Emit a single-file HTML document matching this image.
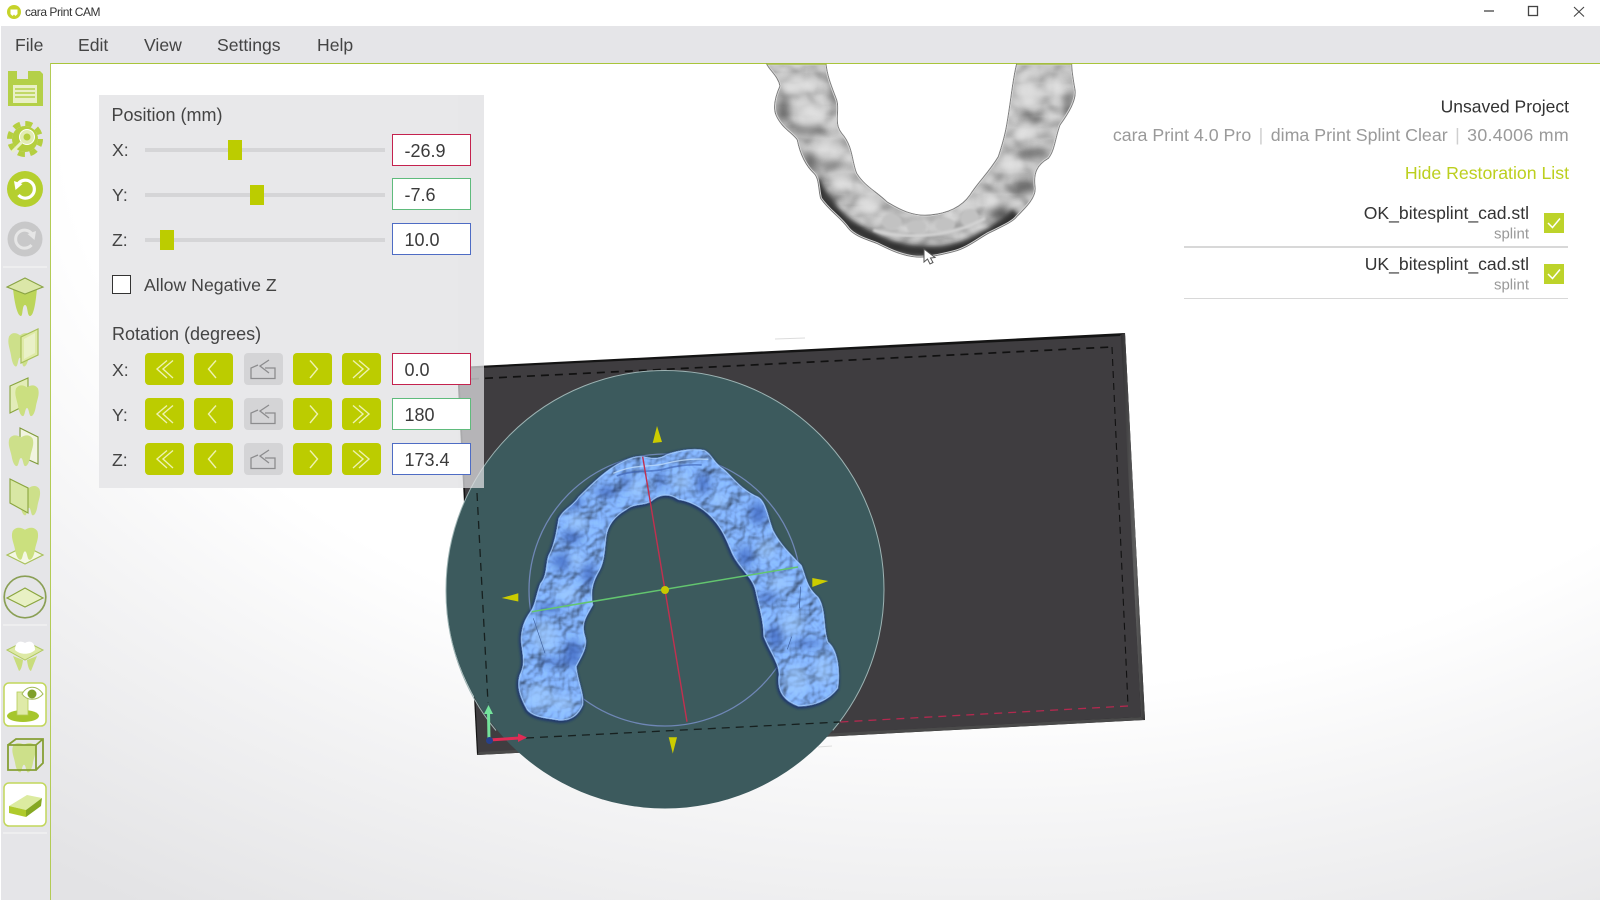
<!DOCTYPE html>
<html><head><meta charset="utf-8"><title>cara Print CAM</title>
<style>
html,body{margin:0;padding:0;width:1600px;height:900px;overflow:hidden;background:#fff}
body{position:relative;font-family:"Liberation Sans",Arial,sans-serif;color:#3a3a3a}
.a{position:absolute;white-space:nowrap}
.t{position:absolute;white-space:nowrap;transform:translateY(-50%);line-height:1}
.r{position:absolute;white-space:nowrap;transform:translateY(-50%);line-height:1;text-align:right}
#view{position:absolute;left:51px;top:64px;width:1549px;height:836px;background:radial-gradient(ellipse 1350px 860px at 60% 5%,#fff 0%,#fff 68%,#f3f3f4 86%,#e3e3e5 112%)}
#menu{position:absolute;left:1px;top:26px;width:1599px;height:37px;background:#e5e5e8}
#gl{position:absolute;left:50px;top:63px;width:1550px;height:1px;background:#a9c53a}
#side{position:absolute;left:1px;top:63px;width:49px;height:837px;background:#e5e5e8;border-right:1.5px solid #b3cb55;box-sizing:content-box}
#panel{position:absolute;left:99px;top:95px;width:385px;height:393px;background:rgba(223,223,225,.74);}
#panelb{position:absolute;left:99px;top:95px;width:359px;height:393px;background:#e8e8ea}
.lbl{font-size:17.7px;color:#444}
.inp{position:absolute;left:392px;width:79px;height:32px;box-sizing:border-box;background:#fff;border:1.5px solid #888;font-size:18px;line-height:33px;padding-left:11.5px;color:#3a3a3a}
.trk{position:absolute;left:145px;width:240px;height:3.5px;background:#d5d5d7}
.th{position:absolute;width:13.5px;height:20px;background:#bccc00}
.btn{position:absolute;width:39px;height:32px;border-radius:4px;background:#bccc00}
.btn.g{background:#d4d4d6}
.btn svg{display:block}
.cb{position:absolute;left:1544px;width:20px;height:20px;background:#bdd32a}
.sep{color:#cfcfcf;margin:0 2.5px}
</style></head><body>
<div id="view"></div>
<div id="menu"></div>
<div id="gl"></div>
<div id="side"></div>

<svg class="a" style="left:0;top:0" width="1600" height="900" viewBox="0 0 1600 900">
<defs>
<linearGradient id="rb" x1="0" x2="1" y1="0" y2="0"><stop offset="0" stop-color="#2f2e30"/><stop offset=".6" stop-color="#5f5f5f"/><stop offset="1" stop-color="#3a3a3a"/></linearGradient>
<filter id="blue" x="-5%" y="-5%" width="110%" height="110%" color-interpolation-filters="sRGB">
<feTurbulence type="fractalNoise" baseFrequency=".018" numOctaves="3" seed="7" result="n"/>
<feDiffuseLighting in="n" surfaceScale="13" diffuseConstant="1.08" lighting-color="#82b2fb" result="l"><feDistantLight azimuth="235" elevation="62"/></feDiffuseLighting>
<feComposite in="l" in2="SourceAlpha" operator="in"/>
</filter>
<filter id="gray" x="-5%" y="-5%" width="110%" height="110%" color-interpolation-filters="sRGB">
<feTurbulence type="fractalNoise" baseFrequency=".015" numOctaves="2" seed="3" result="n"/>
<feDiffuseLighting in="n" surfaceScale="10" diffuseConstant="1.05" lighting-color="#cfcfcf" result="l"><feDistantLight azimuth="90" elevation="62"/></feDiffuseLighting>
<feComposite in="l" in2="SourceAlpha" operator="in"/>
</filter>
<filter id="b6"><feGaussianBlur stdDeviation="6"/></filter>
<filter id="b12"><feGaussianBlur stdDeviation="13"/></filter>
<filter id="b3"><feGaussianBlur stdDeviation="3"/></filter>
<path id="blueP" d="M290 1050C268 1010 258 980 268 945C282 915 280 900 274 860C268 820 278 785 300 755C315 735 318 700 330 670C352 645 345 610 355 585C372 555 378 515 385 475C400 445 425 440 445 410C480 375 515 340 555 315C590 295 620 282 650 290C670 295 690 295 710 282C745 270 790 262 825 270C850 285 850 305 880 325C910 350 930 385 985 410C1010 425 1015 470 1030 510C1050 550 1085 585 1115 615C1130 650 1130 680 1165 710C1190 745 1180 800 1195 845C1225 870 1232 930 1225 985C1195 1025 1150 1040 1105 1040C1065 1025 1040 1000 1045 950C1050 915 1020 880 1000 830C1000 780 985 740 975 690C965 650 925 625 905 580C890 545 880 515 850 480C820 445 780 425 745 420C720 402 690 402 665 425C640 440 615 430 590 450C555 470 535 495 530 530C525 570 525 610 505 640C488 670 482 700 490 735C470 770 455 790 465 825C478 860 455 890 440 920C445 965 465 1005 460 1035C445 1070 420 1085 385 1082C350 1075 310 1075 290 1050Z"/>
<clipPath id="blueC"><use href="#blueP"/></clipPath>
<path id="grayP" d="M80 42C90 62 115 80 120 108C108 135 98 170 108 195C125 235 160 250 172 270C178 300 190 340 222 370C238 385 235 420 242 445C270 485 300 500 325 535C345 560 385 570 410 580C440 595 480 615 520 620C560 625 600 615 640 605C680 595 710 570 745 550C785 530 820 515 830 500C860 470 890 440 885 410C880 370 890 345 925 325C945 300 945 265 960 225C985 190 1010 150 1005 120C1000 90 995 65 995 42H830C820 80 815 130 808 175C800 230 795 260 775 320C745 370 715 395 690 435C665 470 625 490 570 495C520 500 480 480 440 455C410 425 375 410 350 370C335 335 340 290 305 250C280 220 300 180 290 150C275 110 262 80 258 42Z"/>
<clipPath id="grayC"><use href="#grayP"/></clipPath>
<path id="tooth" d="M-11 -10C-8 -14 -3 -13 0 -11C3 -13 8 -14 11 -10C13 -5 10 0 9 5C8 11 6 14 4 14C2 14 2 7 0 7C-2 7 -2 14 -4 14C-6 14 -8 11 -9 5C-10 0 -13 -5 -11 -10Z"/>
</defs>

<!-- faint labels -->
<line x1="775" y1="339" x2="805" y2="338" stroke="#dcdcdc" stroke-width="1"/>
<line x1="818" y1="747" x2="832" y2="746" stroke="#dddddd" stroke-width="1"/>

<!-- build plate -->
<polygon points="457,367 1125,333 1145,720 477,755" fill="#141414"/>
<polygon points="1120,335 1125,333 1145,720 1141,717" fill="url(#rb)"/>
<polygon points="479,751 1141,717 1144.500,720 477,755" fill="#4a4a4a"/>
<polygon points="459,369 1121,336 1141,717 478,752" fill="#3f3d40"/>
<line x1="471" y1="379" x2="1112" y2="347" stroke="#111" stroke-width="1.700" stroke-dasharray="8 6"/>
<line x1="1112" y1="347" x2="1128" y2="706" stroke="#111" stroke-width="1.100" stroke-dasharray="7 5"/>
<line x1="1128" y1="706" x2="840" y2="722" stroke="#b3294f" stroke-width="1.300" stroke-dasharray="8 6"/>

<!-- gizmo disc -->
<circle cx="665" cy="589.500" r="219" fill="#3c5a5d"/>
<path d="M496 730.500A219 219 0 0 1 446 589.500A219 219 0 0 1 884 589.500A219 219 0 0 1 832.800 730.300" fill="none" stroke="#9db3b3" stroke-width="1"/>
<circle cx="665" cy="590" r="136" fill="none" stroke="#6f87b6" stroke-width="1.300"/>
<!-- dashed over disc -->
<line x1="477" y1="493" x2="488" y2="703" stroke="#17201f" stroke-width="1.300" stroke-dasharray="8 6"/>
<line x1="526" y1="738" x2="840" y2="722" stroke="#17201f" stroke-width="1.300" stroke-dasharray="8 6"/>

<!-- blue aligner -->
<g transform="translate(430 360) scale(.33333)">
 <use href="#blueP" fill="#1c3470" stroke="#1c3470" stroke-width="7" transform="translate(-2 3)" filter="url(#b3)" opacity=".85"/>
 <use href="#blueP" filter="url(#blue)" fill="#000"/>
 <g clip-path="url(#blueC)">
  <g filter="url(#b12)" fill="#3a63be" opacity=".72">
   <ellipse cx="420" cy="425" rx="40" ry="18"/><ellipse cx="530" cy="395" rx="32" ry="15"/>
   <ellipse cx="425" cy="530" rx="30" ry="20"/><ellipse cx="395" cy="605" rx="28" ry="26"/><ellipse cx="475" cy="640" rx="18" ry="34"/>
   <ellipse cx="430" cy="880" rx="26" ry="40"/><ellipse cx="985" cy="460" rx="26" ry="34"/><ellipse cx="945" cy="590" rx="22" ry="30"/>
   <ellipse cx="1010" cy="715" rx="30" ry="14"/><ellipse cx="1035" cy="830" rx="22" ry="36"/><ellipse cx="820" cy="370" rx="18" ry="30"/><ellipse cx="690" cy="360" rx="10" ry="30"/>
   <ellipse cx="355" cy="745" rx="40" ry="12"/><ellipse cx="380" cy="905" rx="50" ry="10"/><ellipse cx="1130" cy="850" rx="50" ry="10"/><ellipse cx="590" cy="365" rx="12" ry="24"/>
  </g>
  <g filter="url(#b12)" fill="#a3cdff" opacity=".6">
   <ellipse cx="330" cy="1010" rx="42" ry="38"/><ellipse cx="400" cy="1030" rx="34" ry="26"/><ellipse cx="345" cy="830" rx="40" ry="46"/><ellipse cx="1100" cy="960" rx="36" ry="48"/><ellipse cx="1180" cy="930" rx="28" ry="46"/>
   <ellipse cx="1085" cy="790" rx="36" ry="38"/><ellipse cx="440" cy="490" rx="30" ry="24"/><ellipse cx="620" cy="385" rx="26" ry="28"/><ellipse cx="755" cy="365" rx="28" ry="26"/>
   <ellipse cx="1010" cy="570" rx="28" ry="30"/><ellipse cx="870" cy="420" rx="24" ry="20"/><ellipse cx="1050" cy="670" rx="34" ry="20"/><ellipse cx="440" cy="600" rx="22" ry="24"/><ellipse cx="410" cy="700" rx="34" ry="24"/>
  </g>
  <use href="#blueP" fill="none" stroke="#a9cffb" stroke-width="8" opacity=".8"/>
  <use href="#blueP" fill="none" stroke="#23407f" stroke-width="2.500" opacity=".55"/>
  <path d="M550 340C610 312 660 322 700 312C745 300 790 295 835 298" fill="none" stroke="#b9d8fb" stroke-width="4" opacity=".85"/>
  <path d="M560 348C610 328 660 338 700 328C745 315 780 313 815 315" fill="none" stroke="#3a5fb0" stroke-width="5" opacity=".6"/>
 </g>
 <path d="M310 775L345 880M1112 680L1108 745M1085 830L1072 868" fill="none" stroke="#3f62a0" stroke-width="2"/>
</g>

<!-- axes -->
<line x1="642.700" y1="456.700" x2="687" y2="721.700" stroke="#c2304f" stroke-width="1.400"/>
<line x1="531.700" y1="611.700" x2="798" y2="567" stroke="#63c56f" stroke-width="1.500"/>
<circle cx="665" cy="590" r="4" fill="#c8c800"/>
<g fill="#cccc00">
 <polygon points="657,426 652.700,443 662,442"/>
 <polygon points="668.700,737.300 677,737.300 672.800,753.500"/>
 <polygon points="501.700,598 518.300,593.300 518.300,601.500"/>
 <polygon points="828.300,581 812.300,578 812.300,587"/>
</g>
<!-- origin triad -->
<line x1="489" y1="740" x2="488.500" y2="712" stroke="#74e39c" stroke-width="3"/>
<polygon points="488.500,705 484,714 493,714" fill="#74e39c"/>
<line x1="489" y1="740" x2="520" y2="738" stroke="#e02c55" stroke-width="3"/>
<polygon points="527,737.500 518,733.500 518,742" fill="#e02c55"/>
<circle cx="489.500" cy="740.500" r="3.500" fill="#26408c"/>

<!-- gray aligner -->
<g transform="translate(740 50) scale(.33333)">
 <use href="#grayP" fill="#777" stroke="#777" stroke-width="3"/>
 <use href="#grayP" filter="url(#gray)" fill="#000"/>
 <g clip-path="url(#grayC)">
  <path d="M225 390C250 470 320 530 400 565C470 605 600 620 680 585C730 565 780 535 830 490" fill="none" stroke="#1e1e1e" stroke-width="34" filter="url(#b6)" opacity=".85"/>
  <g filter="url(#b12)" fill="#3a3a3a" opacity=".7">
   <ellipse cx="130" cy="175" rx="18" ry="34"/><ellipse cx="210" cy="335" rx="22" ry="26"/><ellipse cx="265" cy="450" rx="24" ry="28"/>
   <ellipse cx="880" cy="310" rx="44" ry="14"/><ellipse cx="850" cy="410" rx="34" ry="20"/><ellipse cx="780" cy="490" rx="32" ry="26"/><ellipse cx="985" cy="170" rx="12" ry="50"/>
   <ellipse cx="285" cy="120" rx="12" ry="50"/><ellipse cx="200" cy="240" rx="60" ry="10"/><ellipse cx="270" cy="345" rx="40" ry="10"/><ellipse cx="870" cy="205" rx="40" ry="8"/>
  </g>
  <g filter="url(#b12)" fill="#e6e6e6" opacity=".75">
   <ellipse cx="215" cy="195" rx="52" ry="34"/><ellipse cx="175" cy="110" rx="45" ry="28"/><ellipse cx="265" cy="290" rx="40" ry="28"/><ellipse cx="300" cy="395" rx="32" ry="26"/>
   <ellipse cx="860" cy="125" rx="34" ry="42"/><ellipse cx="950" cy="110" rx="28" ry="32"/><ellipse cx="860" cy="250" rx="36" ry="28"/><ellipse cx="815" cy="350" rx="32" ry="28"/>
   <ellipse cx="385" cy="465" rx="34" ry="32"/><ellipse cx="755" cy="450" rx="22" ry="26"/>
  </g>
  <g fill="#c2c2c2" filter="url(#b3)">
   <ellipse cx="455" cy="515" rx="30" ry="24"/><ellipse cx="530" cy="530" rx="30" ry="20"/><ellipse cx="615" cy="525" rx="30" ry="22"/><ellipse cx="690" cy="505" rx="28" ry="28"/>
  </g>
  <path d="M400 540C470 565 620 570 735 505" fill="none" stroke="#d4d4d4" stroke-width="9" filter="url(#b3)"/>
  <use href="#grayP" fill="none" stroke="#d2d2d2" stroke-width="8"/>
  <use href="#grayP" fill="none" stroke="#555" stroke-width="2"/>
 </g>
 <rect x="80" y="40" width="180" height="4" fill="#a5c037" opacity=".9"/>
 <rect x="830" y="40" width="166" height="4" fill="#a5c037" opacity=".9"/>
</g>
<path d="M924 249V262L927.500 259L930 264L933 262.500L930.500 258L935 257.500Z" fill="#fff" stroke="#555" stroke-width="1"/>

<!-- window icons -->
<g stroke="#444" fill="none">
 <line x1="1484" y1="11" x2="1494" y2="11" stroke-width="1.300"/>
 <rect x="1528.500" y="6.500" width="9" height="9" stroke-width="1.300"/>
 <path d="M1574 7L1584 16.500M1584 7L1574 16.500" stroke-width="1.100"/>
</g>
<circle cx="14" cy="12" r="7" fill="#c6d32a"/>
<path d="M10.500 9.500H17.500V14L15.500 16L14 14.500L12.500 16L10.500 14Z" fill="#fff"/>

<!-- sidebar icons -->
<line x1="3" y1="267" x2="47" y2="267" stroke="#f6f6f6" stroke-width="1"/>
<line x1="3" y1="625" x2="47" y2="625" stroke="#f6f6f6" stroke-width="1"/>
<line x1="3" y1="833" x2="47" y2="833" stroke="#f6f6f6" stroke-width="1"/>
<!-- save -->
<path d="M8 71H40L43 74V106H8Z" fill="#b4d048"/>
<rect x="17" y="71" width="11" height="8" fill="#e5e5e8"/>
<rect x="13" y="85" width="24" height="18" fill="#e9f0c6"/>
<path d="M15 89H35M15 93H35M15 97H35" stroke="#b4d048" stroke-width="1.400"/>
<!-- gear -->
<circle cx="25" cy="139" r="13" fill="#b5cf40"/>
<circle cx="25" cy="139" r="15.500" fill="none" stroke="#b5cf40" stroke-width="5" stroke-dasharray="7 5.200"/>
<circle cx="27" cy="137" r="7.500" fill="#e2ecb4" stroke="#fff" stroke-width="1"/>
<circle cx="27" cy="137" r="3.500" fill="#b5cf40"/>
<path d="M22 142L12 152" stroke="#e9f0c6" stroke-width="3"/>
<!-- undo -->
<circle cx="25" cy="189" r="18" fill="#b5cf2e"/>
<path d="M18 184A9 9 0 1 1 18.500 195" fill="none" stroke="#fff" stroke-width="3.200"/>
<polygon points="14,181 22.500,184 15.500,190" fill="#fff"/>
<!-- redo -->
<circle cx="25" cy="239" r="17.500" fill="#c8c8c9"/>
<path d="M32 234A9 9 0 1 0 31.500 245" fill="none" stroke="#e6e6e6" stroke-width="3"/>
<polygon points="36,231 27.500,234 34.500,240" fill="#e6e6e6"/>
<!-- icon1 tooth with plane -->
<path d="M13 288C14 300 17 316 21 316C23 316 22 305 25 305C28 305 27 316 30 316C34 316 36 300 37 288Z" fill="#bcd55a"/>
<polygon points="7,287 25,278 43,287 25,294" fill="#dbe7a8" stroke="#89a344" stroke-width="1.100"/>
<!-- icon2 -->
<g transform="translate(20 349)"><use href="#tooth" fill="#cde08a" transform="scale(1 1.25)"/></g>
<polygon points="21,337 38,329 38,355 21,363" fill="#dfeaa8" stroke="#a8c05a" stroke-width="1.200"/>
<polygon points="24,339 35,333 35,353 24,359" fill="#eaf1c8"/>
<!-- icon3 -->
<polygon points="10,386 28,378 28,404 10,413" fill="#e3ecb8" stroke="#88a53c" stroke-width="1.100"/>
<g transform="translate(27 400)"><use href="#tooth" fill="#cbdf80" transform="scale(1 1.15)"/></g>
<!-- icon4 -->
<polygon points="20,428 38,437 38,464 20,456" fill="#f1f4e0" stroke="#7f9a3a" stroke-width="1.100"/>
<g transform="translate(21 450)"><use href="#tooth" fill="#cde08a" transform="scale(1.05 1.15)"/></g>
<!-- icon5 -->
<g transform="translate(29 500)"><use href="#tooth" fill="#cde08a" transform="scale(.95 1.1)"/></g>
<polygon points="10,479 28,488 28,513 10,503" fill="#d8e7a4" stroke="#8aa53e" stroke-width="1.100"/>
<!-- icon6 -->
<polygon points="7,555 25,546 43,555 25,564" fill="#f4f7e3" stroke="#a8c05a" stroke-width="1.200"/>
<g transform="translate(25 543)"><use href="#tooth" fill="#cbe07e" transform="scale(1.12 1.2)"/></g>
<!-- icon7 -->
<circle cx="25" cy="597" r="20.800" fill="none" stroke="#8a9f55" stroke-width="1.700"/>
<polygon points="7,598 25,588 43,598 25,607" fill="#e8f0c4" stroke="#8aa53e" stroke-width="1.200"/>
<!-- icon8 -->
<path d="M13 656L19 671C22 670 23 660 23 660ZM37 656L31 671C28 670 27 660 27 660Z" fill="#c9dd7c"/>
<polygon points="7,650 17,645 33,645 43,650 25,660" fill="#dde9a5" stroke="#b0c860" stroke-width="1"/>
<path d="M15 650C15 642 20 640 25 643C30 640 35 642 35 650C30 655 20 655 15 650Z" fill="#fff"/>
<!-- icon9 active -->
<rect x="4" y="683" width="42" height="43" rx="5" fill="#fff" stroke="#c2d75a" stroke-width="1.500"/>
<ellipse cx="23" cy="716" rx="16" ry="6" fill="#a6c62c"/>
<rect x="17" y="692" width="11" height="23" fill="#dfeaa8" stroke="#b5cc55" stroke-width=".8"/>
<path d="M22 694C27 685 37 685 43 694C37 701 27 701 22 694Z" fill="#fff" stroke="#a4bc5a" stroke-width="1"/>
<circle cx="32" cy="694" r="4.500" fill="#7f9f2a"/>
<!-- icon10 -->
<g transform="translate(24 757)"><use href="#tooth" fill="#cde08a" transform="scale(1 1.1)"/></g>
<g fill="none" stroke="#86a035" stroke-width="1.800"><path d="M8 745H36V770H8ZM8 745L16 739H43V763L36 770M36 745L43 739"/></g>
<!-- icon11 active -->
<rect x="4" y="783" width="42" height="43" rx="5" fill="#fff" stroke="#c2d75a" stroke-width="1.500"/>
<polygon points="9,806 27,795 42,798 26,810" fill="#dcebA0"/>
<polygon points="9,806 26,810 26,817 9,813" fill="#afca2c"/>
<polygon points="26,810 42,798 41,806 26,817" fill="#86a822"/>
</svg>

<div class="t" style="left:25px;top:12px;font-size:12px;color:#333;letter-spacing:-.45px">cara Print CAM</div>
<div class="t" style="left:15px;top:46px;font-size:17.6px;color:#444">File</div>
<div class="t" style="left:78px;top:46px;font-size:17.6px;color:#444">Edit</div>
<div class="t" style="left:144px;top:46px;font-size:17.6px;color:#444">View</div>
<div class="t" style="left:217px;top:46px;font-size:17.6px;color:#444">Settings</div>
<div class="t" style="left:317px;top:46px;font-size:17.6px;color:#444">Help</div>

<!-- panel -->
<div id="panel"></div>
<div id="panelb"></div>
<div class="t lbl" style="left:111.500px;top:114.500px;font-size:18px">Position (mm)</div>
<div class="t lbl" style="left:112px;top:151px">X:</div>
<div class="t lbl" style="left:112px;top:196px">Y:</div>
<div class="t lbl" style="left:112px;top:241px">Z:</div>
<div class="trk" style="top:148px"></div><div class="th" style="left:228px;top:140px"></div>
<div class="trk" style="top:193px"></div><div class="th" style="left:250px;top:185px"></div>
<div class="trk" style="top:238px"></div><div class="th" style="left:160px;top:230px"></div>
<div class="inp" style="top:134px;border-color:#c4224e">-26.9</div>
<div class="inp" style="top:178px;border-color:#5fbb7c">-7.6</div>
<div class="inp" style="top:223px;border-color:#4e6cc4">10.0</div>
<div class="a" style="left:112px;top:275px;width:19px;height:19px;box-sizing:border-box;background:#fff;border:1.5px solid #333"></div>
<div class="t lbl" style="left:144px;top:285.500px">Allow Negative Z</div>
<div class="t lbl" style="left:112px;top:333.500px;font-size:18px">Rotation (degrees)</div>
<div class="t lbl" style="left:112px;top:370.500px">X:</div>
<div class="t lbl" style="left:112px;top:415.500px">Y:</div>
<div class="t lbl" style="left:112px;top:460.500px">Z:</div>

<svg class="a" style="left:0;top:0" width="0" height="0"><defs>
<g id="ll"><path d="M22 7.500L12 16L22 25M28 7.500L18 16L28 25" fill="none" stroke="#eef2b0" stroke-width="1.400"/></g>
<g id="l"><path d="M22 7.500L14.500 16L22 25" fill="none" stroke="#eef2b0" stroke-width="1.400"/></g>
<g id="rs"><path d="M14 12L7 15V25.500H31V15H21" fill="none" stroke="#8c8c8e" stroke-width="1.300"/><path d="M25 7L16 13L25 20" fill="none" stroke="#8c8c8e" stroke-width="1.300"/></g>
<g id="rr"><path d="M17 7.500L27 16L17 25M11 7.500L21 16L11 25" fill="none" stroke="#eef2b0" stroke-width="1.400"/></g>
<g id="r"><path d="M17 7.500L24.500 16L17 25" fill="none" stroke="#eef2b0" stroke-width="1.400"/></g>
</defs></svg>

<div class="btn" style="left:145px;top:353px"><svg width="39" height="32"><use href="#ll"/></svg></div>
<div class="btn" style="left:194px;top:353px"><svg width="39" height="32"><use href="#l"/></svg></div>
<div class="btn g" style="left:244px;top:353px"><svg width="39" height="32"><use href="#rs"/></svg></div>
<div class="btn" style="left:293px;top:353px"><svg width="39" height="32"><use href="#r"/></svg></div>
<div class="btn" style="left:342px;top:353px"><svg width="39" height="32"><use href="#rr"/></svg></div>
<div class="btn" style="left:145px;top:398px"><svg width="39" height="32"><use href="#ll"/></svg></div>
<div class="btn" style="left:194px;top:398px"><svg width="39" height="32"><use href="#l"/></svg></div>
<div class="btn g" style="left:244px;top:398px"><svg width="39" height="32"><use href="#rs"/></svg></div>
<div class="btn" style="left:293px;top:398px"><svg width="39" height="32"><use href="#r"/></svg></div>
<div class="btn" style="left:342px;top:398px"><svg width="39" height="32"><use href="#rr"/></svg></div>
<div class="btn" style="left:145px;top:443px"><svg width="39" height="32"><use href="#ll"/></svg></div>
<div class="btn" style="left:194px;top:443px"><svg width="39" height="32"><use href="#l"/></svg></div>
<div class="btn g" style="left:244px;top:443px"><svg width="39" height="32"><use href="#rs"/></svg></div>
<div class="btn" style="left:293px;top:443px"><svg width="39" height="32"><use href="#r"/></svg></div>
<div class="btn" style="left:342px;top:443px"><svg width="39" height="32"><use href="#rr"/></svg></div>
<div class="inp" style="top:353px;border-color:#c4224e">0.0</div>
<div class="inp" style="top:398px;border-color:#5fbb7c">180</div>
<div class="inp" style="top:443px;border-color:#4e6cc4">173.4</div>

<!-- right info -->
<div class="r" style="right:31px;top:107px;font-size:17.5px;color:#333">Unsaved Project</div>
<div class="r" style="right:31px;top:136px;font-size:17.8px;color:#9a9a9a">cara Print 4.0 Pro <span class="sep">|</span> dima Print Splint Clear <span class="sep">|</span> <span style="letter-spacing:.3px">30.4006 mm</span></div>
<div class="r" style="right:31px;top:174px;font-size:17.7px;color:#bccf1e">Hide Restoration List</div>
<div class="r" style="right:71px;top:214px;font-size:17.6px;color:#333">OK_bitesplint_cad.stl</div>
<div class="r" style="right:71px;top:234px;font-size:15px;color:#999">splint</div>
<div class="r" style="right:71px;top:265px;font-size:17.6px;color:#333">UK_bitesplint_cad.stl</div>
<div class="r" style="right:71px;top:285px;font-size:15px;color:#999">splint</div>
<div class="cb" style="top:213px"><svg width="20" height="20"><path d="M4 10L8.500 14.500L16 5.500" fill="none" stroke="#fff" stroke-width="1.500"/></svg></div>
<div class="cb" style="top:264px"><svg width="20" height="20"><path d="M4 10L8.500 14.500L16 5.500" fill="none" stroke="#fff" stroke-width="1.500"/></svg></div>
<div class="a" style="left:1184px;top:246px;width:384px;height:1.5px;background:#d8d8d8"></div>
<div class="a" style="left:1184px;top:298px;width:384px;height:1px;background:#d8d8d8"></div>
</body></html>
